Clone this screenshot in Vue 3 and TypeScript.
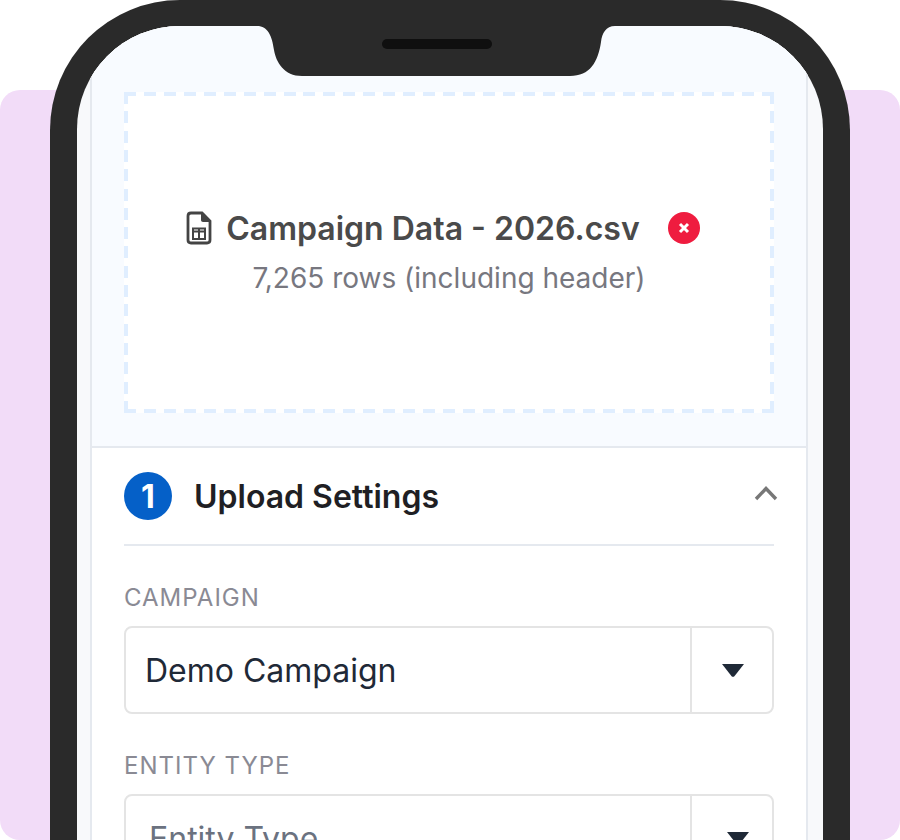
<script setup lang="ts">
const fields = [
  { label: 'Campaign', value: 'Demo Campaign', placeholder: false },
  { label: 'Entity Type', value: 'Entity Type', placeholder: true },
];
</script>

<template>
  <div class="panel">
    <div class="phone">
      <svg class="notch" width="400" height="60" viewBox="240 20 400 60">
        <path d="M240 20H632V26H615C606 26 602 33 601 42C598 62 590 76 570 76H302C284 76 276 62 274 50C272 36 268 26 257 26H240Z" fill="#2a2a2a" />
        <rect x="382" y="39" width="110" height="10" rx="5" fill="#0f0f0f" />
      </svg>
      <div class="screen">
        <div class="card">
          <div class="upload">
            <div class="dropzone">
              <div class="file-row">
                <svg class="file-icon" width="26" height="34" viewBox="0 0 26 34" fill="none">
                  <path d="M5 2H16L24 10V29C24 30.7 22.7 32 21 32H5C3.3 32 2 30.7 2 29V5C2 3.3 3.3 2 5 2Z" stroke="#444" stroke-width="2.8" />
                  <path d="M15 2L24 11H17C15.9 11 15 10.1 15 9Z" fill="#444" />
                  <path d="M7 17.5H19V28H7ZM13 17.5V28M7 20.5H19" stroke="#444" stroke-width="2" />
                </svg>
                <span class="file-name">Campaign Data - 2026.csv</span>
                <svg class="remove" width="32" height="32" viewBox="0 0 32 32">
                  <circle cx="16" cy="16" r="16" fill="#ef1c3f" />
                  <path d="M12 12L20 20M20 12L12 20" stroke="#fff" stroke-width="3" />
                </svg>
              </div>
              <div class="file-meta">7,265 rows (including header)</div>
            </div>
          </div>

          <div class="settings">
            <div class="settings-head">
              <span class="step">1</span>
              <h2>Upload Settings</h2>
              <svg class="chevron" width="24" height="16" viewBox="0 0 24 16" fill="none">
                <path d="M2 14L12 3.5L22 14" stroke="#777" stroke-width="3.4" />
              </svg>
            </div>

            <div v-for="(field, i) in fields" :key="field.label" class="field">
              <label>{{ field.label }}</label>
              <div class="select" :class="{ placeholder: field.placeholder, inset: i > 0 }">
                <span class="value">{{ field.value }}</span>
                <span class="toggle">
                  <svg width="22" height="13" viewBox="0 0 22 13">
                    <path d="M0 0H22L12.4 12.2C11.7 13 10.3 13 9.6 12.2Z" fill="#1f2937" />
                  </svg>
                </span>
              </div>
            </div>
          </div>
        </div>
      </div>
    </div>
  </div>
</template>

<style>
html,
body {
  background: #fff;
  overflow: hidden;
}

#app {
  display: flow-root;
}
</style>

<style scoped>
.panel {
  display: flex;
  box-sizing: border-box;
  width: 900px;
  height: 750px;
  margin-top: 90px;
  padding: 0 50px;
  background: #f2dcf8;
  border-radius: 20px;
  font-family: Inter, "Liberation Sans", sans-serif;
}

.phone {
  position: relative;
  flex: none;
  box-sizing: border-box;
  width: 800px;
  height: 840px;
  margin-top: -90px;
  background: #2a2a2a;
  border: solid #2a2a2a;
  border-width: 26px 27px 0;
  border-radius: 130px 130px 0 0;
}

.notch {
  position: absolute;
  left: 163px;
  top: -6px;
  z-index: 2;
}

.screen {
  box-sizing: border-box;
  height: 814px;
  padding: 0 15px 0 13px;
  background: #f8f9fb;
  border-radius: 103px 103px 0 0;
  overflow: hidden;
}

.card {
  height: 100%;
  background: #fff;
  border: solid #e5e9ef;
  border-width: 0 2px;
}

.upload {
  padding: 66px 32px 33px;
  background: #f8fbff;
  border-bottom: 2px solid #e5e9ef;
}

.dropzone {
  display: flex;
  flex-direction: column;
  align-items: center;
  box-sizing: border-box;
  height: 321px;
  padding-top: 116px;
  background-color: #fff;
  background-image:
    repeating-linear-gradient(90deg, #e0eeff 0 12px, transparent 12px 19.94px),
    repeating-linear-gradient(90deg, #e0eeff 0 12px, transparent 12px 19.94px),
    repeating-linear-gradient(180deg, #e0eeff 0 12px, transparent 12px 19.31px),
    repeating-linear-gradient(180deg, #e0eeff 0 12px, transparent 12px 19.31px);
  background-size: 100% 4px, 100% 4px, 4px 100%, 4px 100%;
  background-position: top, bottom, left, right;
  background-repeat: no-repeat;
}

.file-row {
  display: flex;
  align-items: center;
  height: 40px;
  padding-right: 12px;
}

.file-icon {
  margin-right: 14px;
}

.file-name {
  font-size: 32px;
  font-weight: 600;
  color: #4a4a4a;
}

.remove {
  margin-left: 28px;
}

.file-meta {
  margin-top: 14px;
  font-size: 28px;
  line-height: 32px;
  color: #77777f;
}

.settings {
  padding: 0 32px;
}

.settings-head {
  display: flex;
  align-items: center;
  height: 96px;
  border-bottom: 2px solid #e5e9ef;
}

.step {
  display: flex;
  align-items: center;
  justify-content: center;
  width: 48px;
  height: 48px;
  border-radius: 50%;
  background: #0560c8;
  color: #fff;
  font-size: 32px;
  font-weight: 700;
}

h2 {
  flex: 1;
  margin: 0 0 0 22px;
  font-size: 32px;
  font-weight: 600;
  color: #1f1f24;
}

.chevron {
  margin: 0 -4px 6px 0;
}

.field {
  margin-top: 37px;
}

label {
  display: block;
  margin-bottom: 13px;
  font-size: 24px;
  line-height: 30px;
  letter-spacing: 1px;
  text-transform: uppercase;
  color: #8a8a94;
}

.select {
  display: flex;
  align-items: stretch;
  box-sizing: border-box;
  height: 88px;
  background: #fff;
  border: 2px solid #e4e4e4;
  border-radius: 8px;
}

.value {
  flex: 1;
  align-self: center;
  padding-left: 19px;
  font-size: 32px;
  color: #1f2937;
}

.toggle {
  display: flex;
  align-items: center;
  justify-content: center;
  width: 80px;
  border-left: 2px solid #e4e4e4;
}

.toggle svg {
  margin-left: 2px;
}

.placeholder .value {
  padding-left: 23px;
  color: #6b7280;
}

.inset .toggle svg {
  margin-left: 12px;
}
</style>
